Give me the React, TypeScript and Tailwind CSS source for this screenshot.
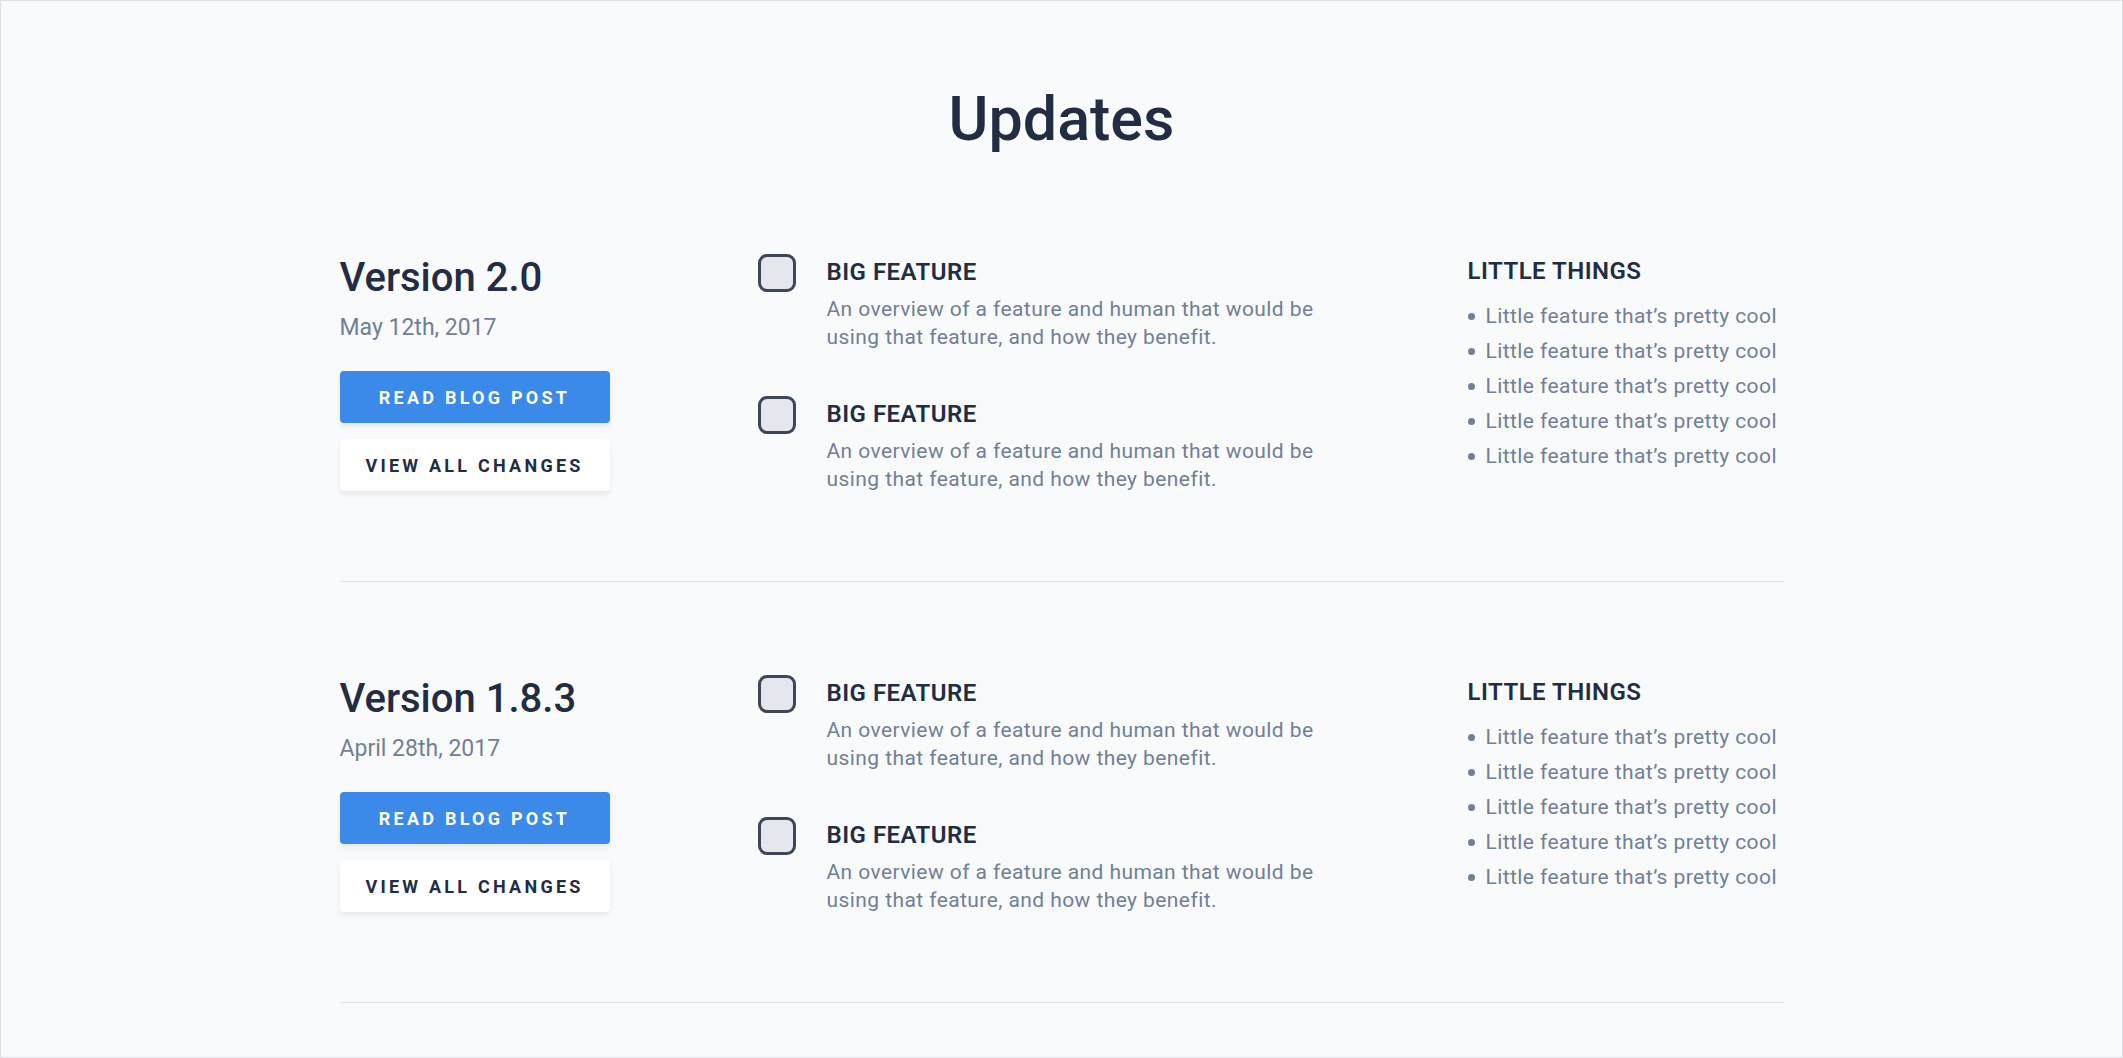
const releases = [
  { version: "Version 2.0", date: "May 12th, 2017" },
  { version: "Version 1.8.3", date: "April 28th, 2017" },
];

const features = ["BIG FEATURE", "BIG FEATURE"];
const littleThings = Array(5).fill("Little feature that’s pretty cool");

function Feature({ title }: { title: string }) {
  return (
    <div className="flex items-start gap-[31px]">
      <div className="w-[38px] h-[38px] shrink-0 rounded-[9px] border-[3px] border-[#3d4757] bg-[#e4e8ee]" />
      <div className="pt-[4px]">
        <h3 className="text-[24px] leading-[28px] font-semibold tracking-[0.02em] text-[#222d44]">{title}</h3>
        <p className="mt-[9px] max-w-[495px] text-[21px] leading-[28px] tracking-[0.02em] text-[#718096]">
          An overview of a feature and human that would be using that feature, and how they benefit.
        </p>
      </div>
    </div>
  );
}

function Release({ version, date }: { version: string; date: string }) {
  return (
    <section className="flex items-start pt-[93px] pb-[88px] border-b border-[#dde3e9]">
      <div className="w-[418px] shrink-0">
        <h2 className="text-[40px] leading-[48px] font-medium text-[#222d44]">{version}</h2>
        <p className="mt-[10px] text-[23px] leading-[32px] text-[#718096]">{date}</p>
        <div className="mt-[27px] flex flex-col gap-4 w-[270px]">
          <button className="h-[52px] rounded-[4px] bg-[#3b89e8] text-white text-[18px] font-bold tracking-[0.18em] shadow-md shadow-gray-300/40">
            READ BLOG POST
          </button>
          <button className="h-[52px] rounded-[4px] bg-white text-[#222d44] text-[18px] font-bold tracking-[0.18em] shadow-md shadow-gray-300/40">
            VIEW ALL CHANGES
          </button>
        </div>
      </div>
      <div className="w-[710px] shrink-0 flex flex-col gap-[45px]">
        {features.map((f, i) => (
          <Feature key={i} title={f} />
        ))}
      </div>
      <div className="flex-1 pt-[1px]">
        <h3 className="text-[24px] leading-[32px] font-semibold tracking-[0.02em] text-[#222d44]">
          LITTLE THINGS
        </h3>
        <ul className="mt-[12px]">
          {littleThings.map((t, i) => (
            <li key={i} className="flex items-center gap-[11px] text-[21px] leading-[35px] tracking-[0.02em] text-[#718096]">
              <span className="w-[7px] h-[7px] rounded-full bg-[#718096]" />
              {t}
            </li>
          ))}
        </ul>
      </div>
    </section>
  );
}

export default function App() {
  return (
    <div className="h-[1058px] overflow-hidden border border-[#dde1e6] bg-[#f8fafc] font-['Roboto',sans-serif]">
      <div className="w-[1444px] mx-auto">
        <h1 className="pt-[88px] mb-[12px] text-center text-[61px] leading-[60px] font-medium text-[#222d44]">
          Updates
        </h1>
        {releases.map((r) => (
          <Release key={r.version} version={r.version} date={r.date} />
        ))}
      </div>
    </div>
  );
}
